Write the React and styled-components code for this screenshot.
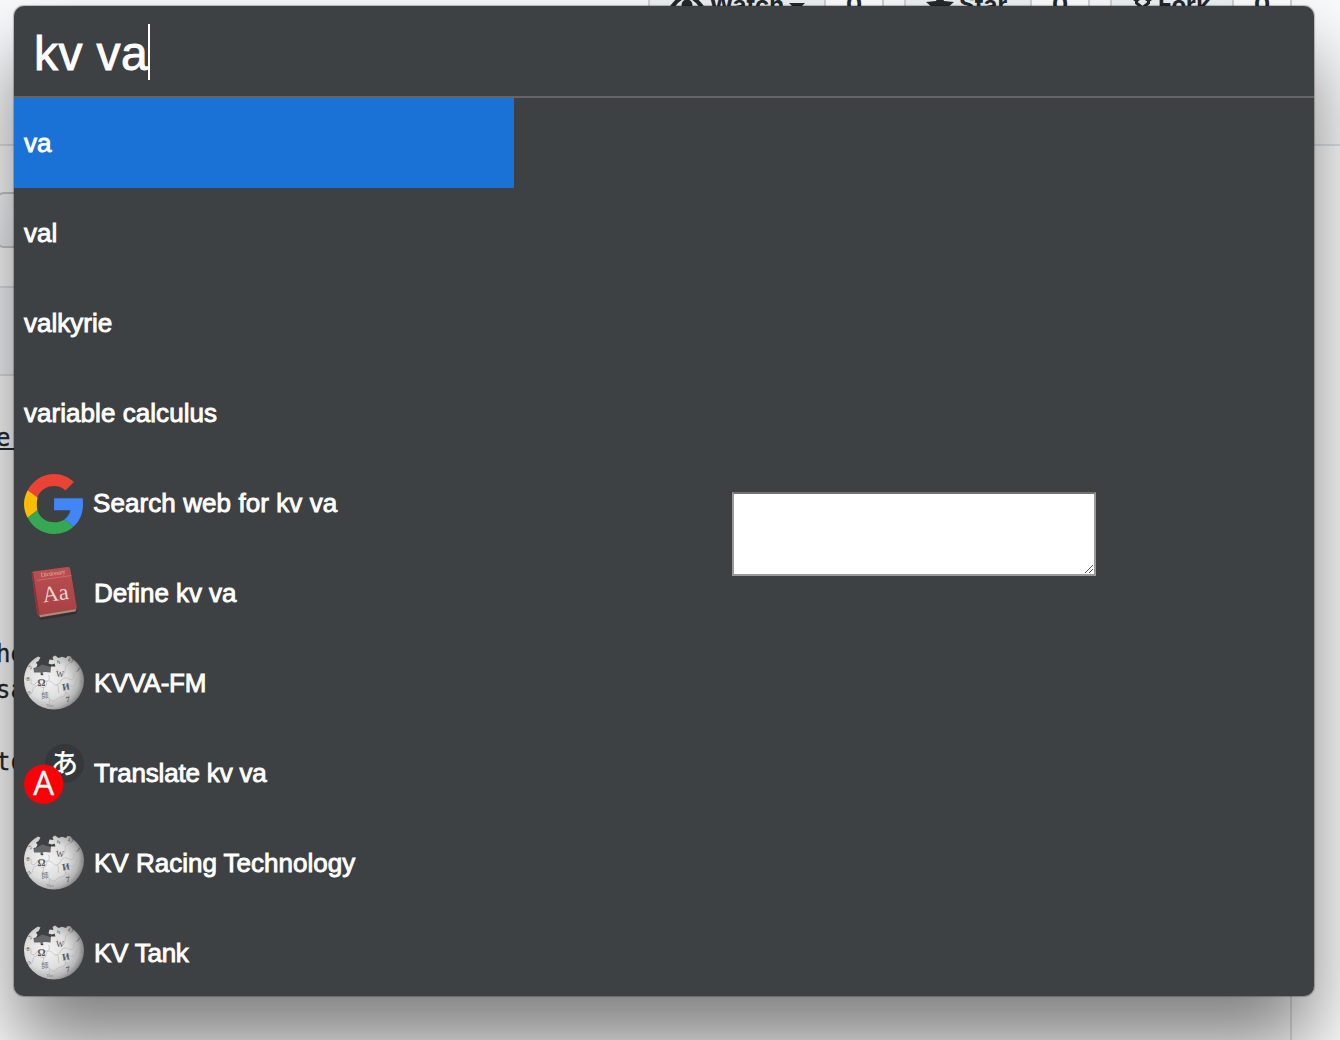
import React from "react";
import styled, { createGlobalStyle } from "styled-components";

const GlobalStyle = createGlobalStyle`
  * { box-sizing: border-box; }
  html, body { margin: 0; padding: 0; height: 100%; overflow: hidden; background: #fff; }
`;

const Screen = styled.div`
  position: relative;
  width: 1340px;
  height: 1040px;
  overflow: hidden;
  background: #fff;
  color: #24292e;
  font-family: Inter, "Liberation Sans", sans-serif;
`;

/* ---------- page behind the launcher ---------- */

const Page = styled.div`
  display: flex;
  flex-direction: column;
  height: 100%;
`;

const PageHeader = styled.header`
  height: 146px;
  flex: none;
  display: flex;
  align-items: flex-start;
  justify-content: flex-end;
  gap: 20px;
  padding-right: 48px;
  background: #fafbfc;
  border-bottom: 2px solid #e1e4e8;
`;

const ButtonGroup = styled.div`
  display: flex;
  width: ${(p) => p.$width}px;
  height: 40px;
  margin-top: -15px;
  border: 2px solid #cfd1d3;
  border-radius: 6px;
  font-size: 24px;
  font-weight: 700;
  line-height: 36px;
`;

const ActionLabel = styled.div`
  flex: 1;
  display: flex;
  align-items: center;
  gap: 5px;
  padding-left: 20px;
  background: #eff3f6;

  svg {
    flex: none;
    margin-top: 4px;
  }
`;

const ActionCount = styled.div`
  width: 58px;
  border-left: 2px solid #cfd1d3;
  background: #fff;
  text-align: center;
`;

const Caret = styled.span`
  width: 0;
  margin-top: 3px;
  border: 8px solid transparent;
  border-top-color: #24292e;
  border-bottom: 0;
`;

const PageBody = styled.main`
  flex: 1;
  display: flex;
  flex-direction: column;
  width: 1292px;
  border-right: 2px solid #dfe2e5;
`;

const BranchButton = styled.div`
  width: 120px;
  height: 56px;
  margin: 46px 0 38px -4px;
  border: 2px solid #c8cbce;
  border-radius: 8px;
  background: linear-gradient(#fafbfc, #eff3f6);
`;

const FileBar = styled.div`
  height: 90px;
  border: solid #dfe2e5;
  border-width: 2px 0;
  background: #f6f8fa;
`;

const Readme = styled.div`
  padding-top: 44px;
  font-family: "DejaVu Sans Mono", "Liberation Mono", monospace;
  font-size: 24px;
  line-height: 36px;
  -webkit-text-stroke: 0.3px #24292e;
`;

const ReadmeLine = styled.div`
  height: 36px;
  margin-bottom: ${(p) => p.$after || 0}px;
  margin-left: -4px;
`;

const ReadmeHeading = styled(ReadmeLine)`
  width: 40px;
  height: 30px;
  border-bottom: 2px solid #24292e;
`;

/* ---------- launcher ---------- */

const Launcher = styled.section`
  position: absolute;
  left: 14px;
  top: 6px;
  width: 1300px;
  height: 990px;
  display: flex;
  flex-direction: column;
  overflow: hidden;
  border-radius: 10px;
  background: #3e4143;
  color: #fff;
  font-family: "Liberation Sans", Arial, sans-serif;
  box-shadow: 0 0 1px 1px rgba(0, 0, 0, 0.25), 0 50px 80px rgba(0, 0, 0, 0.5);
`;

const SearchBar = styled.div`
  flex: none;
  display: flex;
  align-items: center;
  height: 92px;
  padding: 2px 20px 0;
  border-bottom: 2px solid #666564;
`;

const Query = styled.span`
  padding-top: 3px;
  font-size: 48px;
  line-height: 56px;
  letter-spacing: 0.4px;
  -webkit-text-stroke: 0.9px #fff;
`;

const TextCursor = styled.span`
  width: 2px;
  height: 56px;
  background: #fff;
`;

const Panes = styled.div`
  flex: 1;
  min-height: 0;
  display: flex;
`;

const Results = styled.ul`
  width: 500px;
  margin: 0;
  padding: 0;
  list-style: none;
`;

const Result = styled.li`
  display: flex;
  align-items: center;
  gap: 10px;
  height: 90px;
  padding: 0 10px;
  background: ${(p) => (p.$selected ? "#1a72d7" : "transparent")};
  font-size: 26px;
  line-height: 30px;
  letter-spacing: ${(p) => p.$tracking || 0}px;
  -webkit-text-stroke: 0.9px #fff;

  svg {
    flex: none;
    letter-spacing: 0;
    -webkit-text-stroke: 0;
  }
`;

const SquareIcon = styled.svg`
  margin-top: 2px;
`;

const Preview = styled.div`
  flex: 1;
  display: flex;
  align-items: center;
  justify-content: center;
  padding-bottom: 26px;
`;

const NoteField = styled.div`
  position: relative;
  display: flex;
  width: 364px;
  height: 84px;
`;

const NoteInput = styled.textarea`
  flex: 1;
  resize: none;
  outline: none;
  border: 2px solid #999;
  border-top-color: #727272;
  background: #fff;
`;

const Grip = styled.svg`
  position: absolute;
  right: 3px;
  bottom: 3px;
`;

const GoogleIcon = () => (
  <SquareIcon width="59" height="60" viewBox="0 0 60 60" preserveAspectRatio="none">
    <path fill="#ea4335" d="M30.5 12c4.700 0 8.600 1.500 11.600 4.400L50.800 8C45.500 3 38.500 0 30.500 0 18.900 0 8.900 6.600 3.800 16.300l9.600 7.400C15.800 16.900 22.500 12 30.500 12Z" />
    <path fill="#fbbc05" d="M13 30c0-2.200.2-4.300.9-6.300L3.800 16.300C1.500 20.500 0 25.100 0 30s1.400 9.600 3.700 13.700l9.900-7.500C13.100 34.200 13 32.100 13 30Z" />
    <path fill="#34a853" d="M30.500 60c8.100 0 14.900-2.600 19.900-7.400l-9.300-7.200c-2.600 1.700-6.200 2.900-10.600 2.900-8 0-14.700-5-16.900-12.100l-9.900 7.500C8.900 53.400 18.900 60 30.500 60Z" />
    <path fill="#4285f4" d="M59.700 24.200H30.600v12h16.700c-.7 3.500-2.900 6.900-6.200 9.200l9.300 7.200C56.500 47.300 60 39.500 60 30.600c0-2.200-.1-4.300-.3-6.400Z" />
  </SquareIcon>
);

const DictionaryIcon = () => (
  <SquareIcon width="60" height="60" viewBox="0 0 60 60">
    <defs>
      <linearGradient id="cover" x1="0" y1="0" x2="0" y2="1">
        <stop offset="0" stopColor="#bb4f51" />
        <stop offset="1" stopColor="#a84044" />
      </linearGradient>
    </defs>
    <path d="M14 52l2 4 36-6 2-4z" fill="#282b2c" opacity=".65" />
    <path d="M13 49l2 5 37-6.500.5-4.500z" fill="#793033" />
    <path d="M15 50.500l37-6.500-.3 3.300L16 53.200z" fill="#a08f7b" />
    <path d="M9.500 7.600L43.600 3q2.200-.2 2.600 2l6.600 38.500q0 1.500-1.500 1.800L15 51.300q-1.500 0-1.800-1.500L7.700 9.500q0-1.500 1.800-1.900z" fill="url(#cover)" />
    <path d="M8.500 9l6 41.500" stroke="#8b3034" strokeWidth="1.500" fill="none" />
    <path d="M12.500 16.500l34.800-5" stroke="#d58483" strokeWidth=".6" />
    <g fill="#e6d3d2" fontFamily="Liberation Serif, serif" transform="rotate(-8 30 30)">
      <text x="19.500" y="11.500" fontSize="6.500" textLength="25" fill="#e0b0ae">Dictionary</text>
      <text x="18.500" y="37" fontSize="22.500" textLength="26">Aa</text>
    </g>
  </SquareIcon>
);

const GlobeIcon = () => (
  <svg width="60" height="56" viewBox="0 0 60 56">
    <defs>
      <radialGradient id="globe" cx=".38" cy=".45" r=".64">
        <stop offset="0" stopColor="#f4f4f4" />
        <stop offset=".55" stopColor="#dedede" />
        <stop offset=".82" stopColor="#b5b5b5" />
        <stop offset="1" stopColor="#777" />
      </radialGradient>
    </defs>
    <path d="M9 14L14 12L18 9.500L23 11L27 12V19H9Z" fill="#656667" />
    <path
      fill="url(#globe)"
      d="M14 1.500C5 6 0 15 0 25.500A30 29 0 0 0 60 25.500C60 17 56 9 48 3.500L46.500 1.200L43.500 1L42 3L38 1.800L34.500 3L32.500 1.500L31 0.500L28.500 2L29.500 5L25.500 4.500L24.500 8.500L28 9.500L30.500 8.500L31.500 11.500L27 11.500L26.500 17.500L21 17L18.500 17.500L19.500 19.500L18 20.500L16.500 19.500L16.500 17.500L10 17.500L9.500 13L12 12.500L13.500 10L12 7.500L14.500 6L16.500 2.500Z"
    />
    <g fill="none" stroke="#b0b0b0" strokeWidth=".6">
      <path d="M1 24c5-2 7 0 6 3s4 4 5 1 5-3 9-2 6-4 3-6M7 39c3-4 1-7 5-8s6 3 9 1 0-6 4-6 4 5 8 4 3-6 7-7 6 3 9 1-1-6 3-7M19 32c2 4-2 5-1 8s6 1 8 4 5 3 7 0 6-1 8-4-2-5 1-8 7 1 9-2 1-8 5-8M33 30c3 3 0 5 2 8M33 14c2 3-1 5 2 7s5-2 6-5-1-5 3-7 5 1 7-1M26 44c-2 4 1 6 0 9M41 37c4 1 3 5 7 6" />
    </g>
    <g fill="#555" fontFamily="Liberation Serif, DejaVu Serif, serif" textAnchor="middle">
      <text x="17.500" y="31" fontSize="10" fontWeight="700">Ω</text>
      <text x="36" y="22" fontSize="8.500">W</text>
      <text x="42" y="35" fontSize="9.500" fontWeight="700" transform="rotate(-9 42 33)">И</text>
      <text x="21" y="43" fontSize="7" fontFamily="Noto Sans CJK JP, sans-serif" fill="#777">師</text>
      <text x="44" y="47" fontSize="8" fontWeight="700" transform="rotate(-8 44 45)">7</text>
      <text x="34" y="9" fontSize="6">ካ</text>
      <text x="47" y="7.500" fontSize="7" transform="rotate(35 47 5)">Ø</text>
      <text x="54" y="17" fontSize="7" transform="rotate(28 54 15)">J</text>
      <text x="4" y="26" fontSize="6">8</text>
      <text x="6" y="14" fontSize="6" transform="rotate(-35 6 12)">ב</text>
      <text x="5" y="40" fontSize="6" transform="rotate(50 5 38)">ת</text>
      <text x="26" y="52" fontSize="5" fill="#888">Tan</text>
      <text x="57" y="28" fontSize="5" fill="#888">3</text>
    </g>
  </svg>
);

const TranslateIcon = () => (
  <SquareIcon width="60" height="60" viewBox="0 0 60 60">
    <circle cx="40.500" cy="19.500" r="19.500" fill="#35383a" />
    <text x="40.500" y="29.500" textAnchor="middle" transform="rotate(4 40 19)" fontFamily="Noto Sans CJK JP, sans-serif" fontSize="28" fontWeight="500" fill="#fff">あ</text>
    <circle cx="19.700" cy="40.300" r="19.700" fill="#fb0006" />
    <text x="19.700" y="51" textAnchor="middle" fontFamily="Open Sans, sans-serif" fontSize="33" fontWeight="500" fill="#fff" stroke="#fff" strokeWidth=".3">A</text>
  </SquareIcon>
);

const EyeIcon = () => (
  <svg width="34" height="26" viewBox="0 0 34 26">
    <path d="M2 13Q17-8 32 13Q17 34 2 13Z" fill="none" stroke="#24292e" strokeWidth="4" />
    <circle cx="17" cy="11" r="5.500" fill="#24292e" />
  </svg>
);

const StarIcon = () => (
  <svg width="28" height="28" viewBox="0 0 28 28">
    <path d="M14 0l4 8 10 1-7.500 6.500 2.500 10.500-9-5.500L5 26l2.500-10.500L0 9 10 8z" fill="#24292e" />
  </svg>
);

const ForkIcon = () => (
  <svg width="21" height="32" viewBox="0 0 20 32">
    <g fill="none" stroke="#24292e" strokeWidth="3">
      <circle cx="4" cy="6" r="3" />
      <circle cx="16" cy="6" r="3" />
      <circle cx="10" cy="27" r="3" />
      <path d="M4 9v3l6 5 6-5V9M10 17v7" />
    </g>
  </svg>
);

const RESULTS = [
  { label: "va", selected: true },
  { label: "val" },
  { label: "valkyrie" },
  { label: "variable calculus", tracking: 0.05 },
  { label: "Search web for kv va", tracking: 0.08, Icon: GoogleIcon },
  { label: "Define kv va", tracking: -0.05, Icon: DictionaryIcon },
  { label: "KVVA-FM", tracking: -0.2, Icon: GlobeIcon },
  { label: "Translate kv va", tracking: -0.18, Icon: TranslateIcon },
  { label: "KV Racing Technology", Icon: GlobeIcon },
  { label: "KV Tank", tracking: -0.25, Icon: GlobeIcon },
];

const ACTIONS = [
  { label: "Watch", Icon: EyeIcon, width: 236, caret: true },
  { label: "Star", Icon: StarIcon, width: 186 },
  { label: "Fork", Icon: ForkIcon, width: 182 },
];

export default function App() {
  return (
    <Screen>
      <GlobalStyle />
      <Page>
        <PageHeader>
          {ACTIONS.map(({ label, Icon, width, caret }) => (
            <ButtonGroup key={label} $width={width}>
              <ActionLabel>
                <Icon />
                {label}
                {caret && <Caret />}
              </ActionLabel>
              <ActionCount>0</ActionCount>
            </ButtonGroup>
          ))}
        </PageHeader>
        <PageBody>
          <BranchButton />
          <FileBar />
          <Readme>
            <ReadmeHeading $after={186}>e</ReadmeHeading>
            <ReadmeLine>he</ReadmeLine>
            <ReadmeLine $after={36}>sa</ReadmeLine>
            <ReadmeLine>to</ReadmeLine>
          </Readme>
        </PageBody>
      </Page>

      <Launcher>
        <SearchBar>
          <Query>kv va</Query>
          <TextCursor />
        </SearchBar>
        <Panes>
          <Results>
            {RESULTS.map(({ label, selected, tracking, Icon }) => (
              <Result key={label} $selected={selected} $tracking={tracking}>
                {Icon && <Icon />}
                <span>{label}</span>
              </Result>
            ))}
          </Results>
          <Preview>
            <NoteField>
              <NoteInput aria-label="Note" />
              <Grip width="8" height="8" viewBox="0 0 8 8" shapeRendering="crispEdges">
                <path d="M0 7h1v1H0zM1 6h1v1H1zM2 5h1v1H2zM3 4h1v1H3zM4 3h1v1H4zM5 2h1v1H5zM6 1h1v1H6zM7 0h1v1H7zM4 7h1v1H4zM5 6h1v1H5zM6 5h1v1H6zM7 4h1v1H7z" fill="#555" />
              </Grip>
            </NoteField>
          </Preview>
        </Panes>
      </Launcher>
    </Screen>
  );
}
